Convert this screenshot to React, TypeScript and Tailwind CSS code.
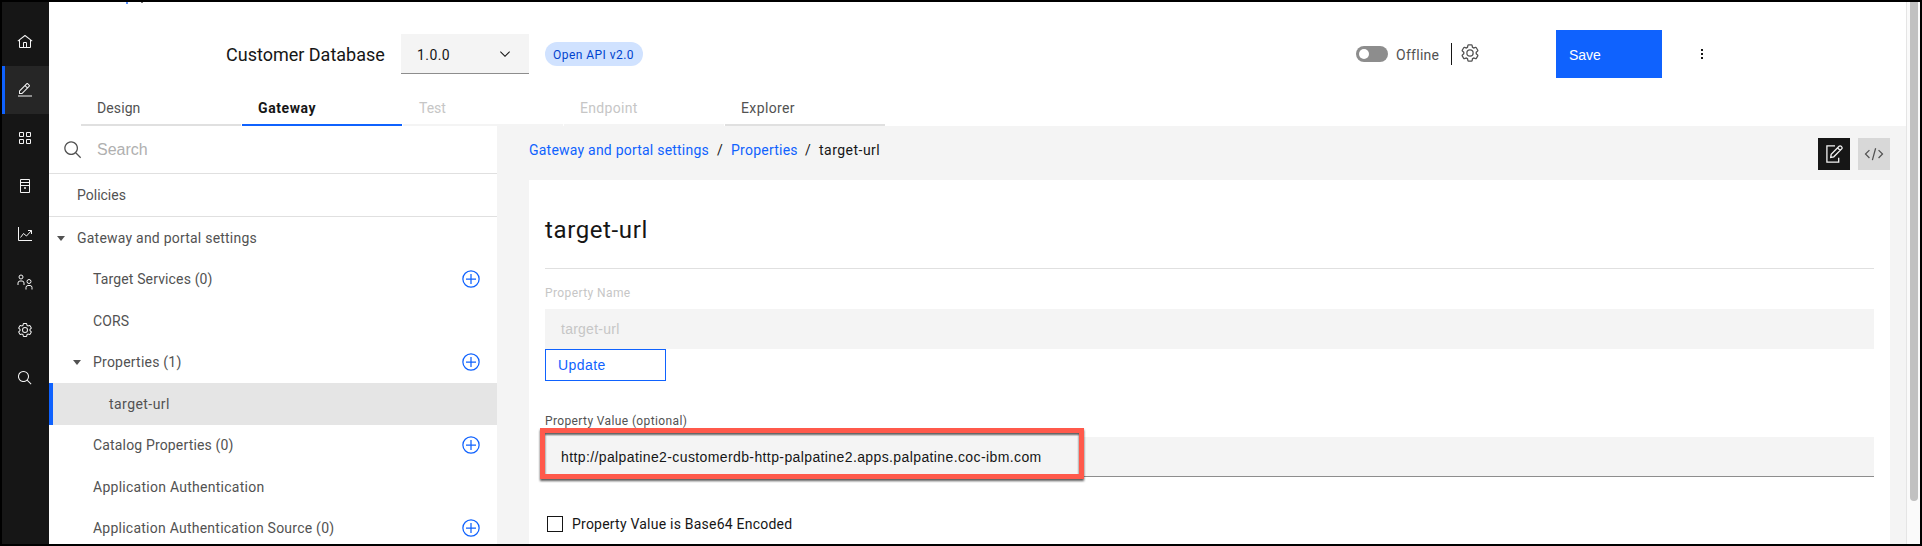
import type { ReactNode } from "react";

const HOME =
  "M16.6123,2.2138a1.01,1.01,0,0,0-1.2427,0L1,13.4194l1.2427,1.5717L4,13.6209V26a2.0041,2.0041,0,0,0,2,2H26a2.0037,2.0037,0,0,0,2-2V13.63L29.7573,15,31,13.4282ZM18,26H14V18h4Zm2,0V18a2.0023,2.0023,0,0,0-2-2H14a2.002,2.002,0,0,0-2,2v8H6V12.0615l10-7.79,10,7.8005V26Z";
const EDIT =
  "M2 27H30V29H2zM25.4,9c0.8-0.8,0.8-2,0-2.8l-3.6-3.6c-0.8-0.8-2-0.8-2.8,0l-15,15V24h6.4L25.4,9z M20.4,4L24,7.6l-3,3L17.4,7L20.4,4z M6,22v-3.6l10-10l3.6,3.6l-10,10H6z";
const SETTINGS =
  "M27,16.76c0-.25,0-.5,0-.76s0-.51,0-.77l1.92-1.68A2,2,0,0,0,29.3,11L26.94,7a2,2,0,0,0-1.73-1,2,2,0,0,0-.64.1l-2.43.82a11.35,11.35,0,0,0-1.31-.75l-.51-2.52a2,2,0,0,0-2-1.61H13.64a2,2,0,0,0-2,1.61l-.51,2.52a11.48,11.48,0,0,0-1.32.75L7.43,6.06A2,2,0,0,0,6.79,6,2,2,0,0,0,5.06,7L2.7,11a2,2,0,0,0,.41,2.51L5,15.24c0,.25,0,.5,0,.76s0,.51,0,.77L3.11,18.45A2,2,0,0,0,2.7,21L5.06,25a2,2,0,0,0,1.73,1,2,2,0,0,0,.64-.1l2.43-.82a11.35,11.35,0,0,0,1.31.75l.51,2.52a2,2,0,0,0,2,1.61h4.72a2,2,0,0,0,2-1.61l.51-2.52a11.48,11.48,0,0,0,1.32-.75l2.42.82a2,2,0,0,0,.64.1,2,2,0,0,0,1.73-1L29.3,21a2,2,0,0,0-.41-2.51ZM25.21,24l-3.43-1.16a8.86,8.86,0,0,1-2.71,1.57L18.36,28H13.64l-.71-3.55a9.36,9.36,0,0,1-2.7-1.57L6.79,24,4.43,20l2.72-2.4a8.9,8.9,0,0,1,0-3.13L4.43,12,6.79,8l3.43,1.16a8.86,8.86,0,0,1,2.71-1.57L13.64,4h4.72l.71,3.55a9.36,9.36,0,0,1,2.7,1.57L25.21,8,27.57,12l-2.72,2.4a8.9,8.9,0,0,1,0,3.13L27.57,20ZM16,22a6,6,0,1,1,6-6A5.94,5.94,0,0,1,16,22Zm0-10a3.91,3.91,0,0,0-4,4,3.91,3.91,0,0,0,4,4,3.91,3.91,0,0,0,4-4A3.91,3.91,0,0,0,16,12Z";
const SEARCH =
  "M29,27.5859l-7.5521-7.5521a11.0177,11.0177,0,1,0-1.4141,1.4141L27.5859,29ZM4,13a9,9,0,1,1,9,9A9.01,9.01,0,0,1,4,13Z";
const GRID =
  "M12 4H6A2 2 0 004 6v6a2 2 0 002 2h6a2 2 0 002-2V6A2 2 0 0012 4zm0 8H6V6h6zM26 4H20a2 2 0 00-2 2v6a2 2 0 002 2h6a2 2 0 002-2V6A2 2 0 0026 4zm0 8H20V6h6zM12 18H6a2 2 0 00-2 2v6a2 2 0 002 2h6a2 2 0 002-2V20A2 2 0 0012 18zm0 8H6V20h6zM26 18H20a2 2 0 00-2 2v6a2 2 0 002 2h6a2 2 0 002-2V20A2 2 0 0026 18zm0 8H20V20h6z";
const ADD =
  "M16,4A12,12,0,1,1,4,16,12,12,0,0,1,16,4m0-2A14,14,0,1,0,30,16,14,14,0,0,0,16,2ZM24 15 17 15 17 8 15 8 15 15 8 15 8 17 15 17 15 24 17 24 17 17 24 17z";
const CODE =
  "M31 16 24 23 22.59 21.59 28.17 16 22.59 10.41 24 9zM1 16 8 9 9.41 10.41 3.83 16 9.41 21.59 8 23zM12.42 25.48 17.64 6.55 19.57 7.07 14.35 26z";
const CHEVRON = "M16 22 6 12 7.4 10.6 16 19.2 24.6 10.6 26 12z";
const CARET = "M24 12 16 22 8 12z";

function Icon({ d, className, children }: { d?: string; className: string; children?: ReactNode }) {
  return (
    <svg viewBox="0 0 32 32" fill="currentColor" className={"shrink-0 " + className}>
      {d && <path d={d} />}
      {children}
    </svg>
  );
}

const rail: ReactNode[] = [
  <Icon d={HOME} className="size-4" />,
  <Icon d={EDIT} className="size-4" />,
  <Icon d={GRID} className="size-4" />,
  <Icon className="size-4">
    <g fill="none" stroke="currentColor" strokeWidth="2">
      <path d="M7 3h18v26H7zM7 9h18M7 15h18" />
      <path d="M14 20h4" strokeWidth="3" />
    </g>
  </Icon>,
  <Icon className="size-4">
    <g fill="none" stroke="currentColor" strokeWidth="2">
      <path d="M3 2v27h27" />
      <path d="M7 23l6-8 6 5 10-11M22 9h7v7" />
    </g>
  </Icon>,
  <Icon className="size-4">
    <g fill="none" stroke="currentColor" strokeWidth="2">
      <circle cx="8" cy="6" r="4" />
      <path d="M2 22v-4a4 4 0 0 1 4-4h4a4 4 0 0 1 4 4v4" />
      <circle cx="24" cy="15" r="4" />
      <path d="M18 31v-4a4 4 0 0 1 4-4h4a4 4 0 0 1 4 4v4" />
    </g>
  </Icon>,
  <Icon d={SETTINGS} className="size-4" />,
  <Icon d={SEARCH} className="size-4" />,
];

const tabs = [
  { label: "Design", style: "border-[#e0e0e0] text-[#525252] tracking-[0.1px]" },
  { label: "Gateway", style: "border-[#0f62fe] text-[#161616] font-bold tracking-[0.6px]" },
  { label: "Test", style: "border-[#f4f4f4] text-[#c6c6c6]" },
  { label: "Endpoint", style: "border-[#f4f4f4] text-[#c6c6c6] tracking-[0.3px]" },
  { label: "Explorer", style: "border-[#e0e0e0] text-[#525252] tracking-[0.38px]" },
];

const tree = [
  { label: "Gateway and portal settings", pad: "pl-1", track: "tracking-[0.22px]", caret: true },
  { label: "Target Services (0)", pad: "pl-5", track: "tracking-[0.14px]", add: true },
  { label: "CORS", pad: "pl-5", track: "tracking-[0.1px]" },
  { label: "Properties (1)", pad: "pl-5", track: "tracking-[0.22px]", caret: true, add: true },
  { label: "target-url", pad: "pl-8", track: "tracking-[0.45px]", active: true },
  { label: "Catalog Properties (0)", pad: "pl-5", track: "tracking-[0.16px]", add: true },
  { label: "Application Authentication", pad: "pl-5", track: "tracking-[0.26px]" },
  { label: "Application Authentication Source (0)", pad: "pl-5", track: "tracking-[0.24px]", add: true },
];

function Rail() {
  return (
    <nav className="flex w-[47px] shrink-0 flex-col bg-[#161616] pt-4 text-[#f4f4f4]">
      {rail.map((icon, i) => (
        <div
          key={i}
          className={
            "flex h-12 shrink-0 items-center " +
            (i === 1 ? "border-l-[3px] border-[#0f62fe] bg-[#262626] pl-3" : "pl-[15px]")
          }
        >
          {icon}
        </div>
      ))}
    </nav>
  );
}

function Header() {
  return (
    <header className="relative flex h-[84px] shrink-0 items-center pt-5 pl-[177px]">
      <span className="absolute top-0 left-[77px] h-[2px] w-[2px] bg-[#5b93ff]" />
      <span className="absolute top-0 left-[92px] h-px w-[2px] bg-[#6f6f6f]" />
      <h1 className="w-[175px] text-[18px] whitespace-nowrap text-[#161616]">Customer Database</h1>
      <div className="flex h-10 w-32 items-center justify-between border-b border-[#8d8d8d] bg-[#f4f4f4] pr-4 pl-4 text-[14px] text-[#161616]">
        <span className="pt-[3px] tracking-[0.42px]">1.0.0</span>
        <Icon d={CHEVRON} className="size-4" />
      </div>
      <span className="ml-4 flex h-6 w-[98px] items-center rounded-full bg-[#d0e2ff] pt-px pl-2 text-[12px] tracking-[0.46px] whitespace-nowrap text-[#0043ce]">
        Open API v2.0
      </span>
      <div className="ml-[713px] flex items-center">
        <span className="flex h-4 w-8 items-center rounded-full bg-[#8d8d8d] pl-[3px]">
          <span className="size-[10px] rounded-full bg-white" />
        </span>
        <span className="w-[63px] pt-[2px] pl-2 text-[14px] tracking-[0.28px] text-[#525252]">Offline</span>
        <span className="h-[22px] w-px bg-[#161616]" />
        <Icon d={SETTINGS} className="mb-[2px] ml-2 size-5 text-[#525252]" />
      </div>
      <button className="ml-[76px] h-12 w-[106px] bg-[#0f62fe] pt-[2px] pl-[13px] text-left font-['Liberation_Sans',sans-serif] text-[14px] text-white">
        Save
      </button>
      <Icon className="ml-8 size-4 text-[#161616]">
        <path d="M14 6h4v4h-4zM14 14h4v4h-4zM14 22h4v4h-4z" />
      </Icon>
    </header>
  );
}

function Tree() {
  return (
    <aside className="w-[448px] shrink-0 overflow-hidden bg-white text-[14px] text-[#525252]">
      <div className="flex h-12 items-center gap-[14px] border-b border-[#e0e0e0] pl-[14px] font-['Liberation_Sans',sans-serif] text-[16px] text-[#b0b0b0]">
        <Icon d={SEARCH} className="size-5 text-[#525252]" />
        <span className="pt-px">Search</span>
      </div>
      <div className="flex h-[43px] items-center border-b border-[#e0e0e0] pl-7">Policies</div>
      {tree.map((row) => (
        <div
          key={row.label}
          className={
            "flex h-[41.5px] items-center pr-4 " +
            row.pad +
            (row.active ? " border-l-4 border-[#0f62fe] bg-[#e5e5e5]" : "")
          }
        >
          {row.caret ? <Icon d={CARET} className="mr-2 size-4" /> : <span className="mr-2 size-4" />}
          <span className={"flex-1 pt-px " + row.track}>{row.label}</span>
          {row.add && <Icon d={ADD} className="size-5 text-[#0f62fe]" />}
        </div>
      ))}
    </aside>
  );
}

function Editor() {
  return (
    <section className="flex flex-1 flex-col bg-[#f4f4f4] pr-4 pl-8">
      <div className="flex h-[54px] shrink-0 justify-between pt-3">
        <div className="flex text-[14px] leading-6 whitespace-nowrap text-[#161616]">
          <a className="w-[188px] tracking-[0.22px] text-[#0f62fe]">Gateway and portal settings</a>
          <span className="w-[14px]">/</span>
          <a className="w-[74px] tracking-[0.24px] text-[#0f62fe]">Properties</a>
          <span className="w-[14px]">/</span>
          <span className="tracking-[0.48px]">target-url</span>
        </div>
        <div className="flex gap-2">
          <span className="flex size-8 items-center justify-center bg-[#161616] text-[#f4f4f4]">
            <svg viewBox="0 0 20 20" className="size-5" fill="none" stroke="currentColor" strokeWidth="1.3">
              <path d="M11 1.8H2.9v16.4h11.8v-4.4" />
              <path d="M6.7 13.4l.5-3.2 7.9-7.9a1.4 1.4 0 0 1 2 0l.6.6a1.4 1.4 0 0 1 0 2l-7.9 7.9zM13.6 3.9l2.6 2.6" />
            </svg>
          </span>
          <span className="flex size-8 items-center justify-center bg-[#d8d8d8] text-[#525252]">
            <Icon d={CODE} className="size-5" />
          </span>
        </div>
      </div>
      <div className="flex flex-1 flex-col bg-white px-4 pt-[34px]">
        <h2 className="pb-[22px] text-[24px] leading-8 tracking-[0.62px] text-[#161616]">target-url</h2>
        <div className="h-px bg-[#e0e0e0]" />
        <label className="mt-4 mb-2 text-[12px] leading-4 tracking-[0.4px] text-[#c6c6c6]">Property Name</label>
        <div className="flex h-10 items-center bg-[#f4f4f4] pt-px pl-4 font-['Liberation_Sans',sans-serif] text-[14px] tracking-[0.25px] text-[#c6c6c6]">
          target-url
        </div>
        <button className="h-8 w-[121px] border border-[#0f62fe] pl-3 text-left font-['Liberation_Sans',sans-serif] text-[14px] tracking-[0.45px] text-[#0f62fe]">
          Update
        </button>
        <label className="mt-8 mb-2 text-[12px] leading-4 tracking-[0.38px] text-[#525252]">
          Property Value (optional)
        </label>
        <div className="relative flex h-10 items-center border-b border-[#8d8d8d] bg-[#f4f4f4] pt-px pl-4 font-['Liberation_Sans',sans-serif] text-[14px] tracking-[0.39px] text-[#161616]">
          http://palpatine2-customerdb-http-palpatine2.apps.palpatine.coc-ibm.com
          <span className="absolute -top-[9px] -left-[5px] h-[51px] w-[544px] border-[5px] border-[#ff594b] drop-shadow-[0_2px_1px_rgba(0,0,0,0.65)]" />
        </div>
        <div className="mt-[37px] flex h-5 items-center pl-[2px] text-[14px] text-[#161616]">
          <span className="size-4 border border-[#161616]" />
          <span className="pl-[9px] tracking-[0.22px]">Property Value is Base64 Encoded</span>
        </div>
      </div>
    </section>
  );
}

export default function App() {
  return (
    <div className="flex h-[546px] w-[1922px] overflow-hidden bg-black p-[2px] font-['Roboto',sans-serif]">
      <Rail />
      <main className="flex min-w-0 flex-1 flex-col overflow-hidden bg-white">
        <Header />
        <div className="flex h-10 shrink-0 gap-px pl-8">
          {tabs.map((tab) => (
            <div
              key={tab.label}
              className={"w-40 border-b-2 pt-[13px] pl-4 text-[14px] leading-[18px] " + tab.style}
            >
              {tab.label}
            </div>
          ))}
        </div>
        <div className="flex min-h-0 flex-1">
          <Tree />
          <Editor />
        </div>
      </main>
      <div className="w-[14px] shrink-0 border-l border-[#e5e5e5] bg-[#fafafa] pl-[3px]">
        <div className="h-[499px] w-2 rounded-b-full bg-[#c1c1c1]" />
      </div>
    </div>
  );
}
